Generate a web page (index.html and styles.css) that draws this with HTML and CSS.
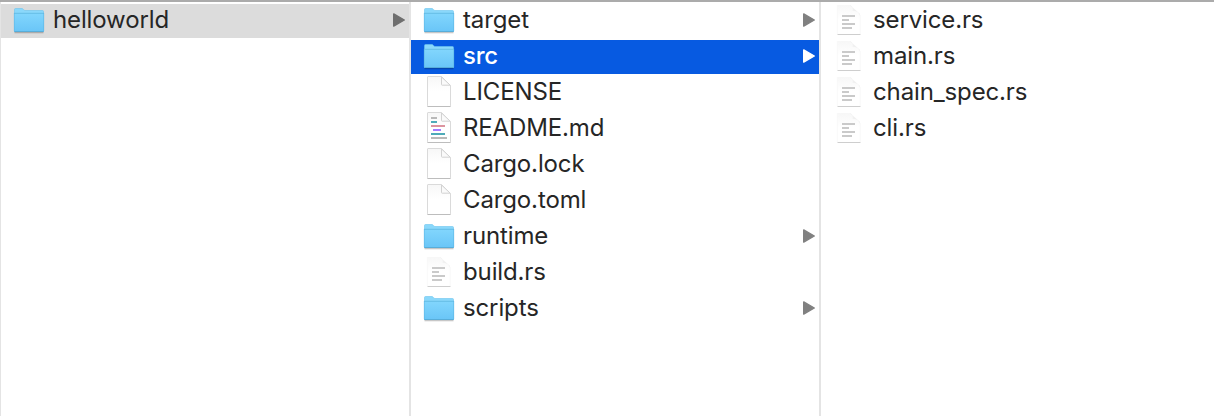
FILE: index.html
```html
<!DOCTYPE html>
<html lang="en">
<head>
<meta charset="utf-8">
<title>helloworld</title>
<link rel="stylesheet" href="styles.css">
</head>
<body>
<svg class="defs" aria-hidden="true">
  <defs>
    <linearGradient id="folder-fill" x1="0" y1="0" x2="0" y2="1"><stop offset="0" stop-color="#82d6fd"/><stop offset="1" stop-color="#69c5f7"/></linearGradient>
    <linearGradient id="paper-fill" x1="0" y1="0" x2="0" y2="1"><stop offset="0" stop-color="#f7f7f7"/><stop offset=".5" stop-color="#fff"/></linearGradient>
    <linearGradient id="fold-fill" x1="0" y1="1" x2="1" y2="0"><stop offset="0" stop-color="#fff"/><stop offset=".55" stop-color="#eee"/><stop offset="1" stop-color="#ccc"/></linearGradient>
  </defs>
  <symbol id="folder" viewBox="0 0 32 34">
    <path d="M1.500 28.500h29" stroke="#000" stroke-opacity=".22" stroke-width="1.600"/>
    <path d="M1.500 5.500q0-1 1-1H9c1.300 0 1.500 2 3 2h17.500q1 0 1 1v2h-29Z" fill="#8ad8fb" stroke="#6cc4ee" stroke-width=".6"/>
    <path d="M1 9h30v18.200q0 .8-.8.8H1.800Q1 28 1 27.200Z" fill="url(#folder-fill)"/>
    <path d="M1 9.300h30" stroke="#60b6df" stroke-width=".8"/>
    <path d="M1.300 27.500h29.400" stroke="#58add9"/>
    <path d="M1.300 9v18M30.700 9v18" stroke="#5cb5e3" stroke-width=".6"/>
  </symbol>
  <symbol id="paper" viewBox="0 0 32 34">
    <path d="M5 .5h13.500L27.500 9.500v20.300q0 .7-.7.700H5.200q-.7 0-.7-.7V1Q4.500.5 5 .5Z" fill="url(#paper-fill)" stroke="#dadada"/>
    <path d="M4.500 30.500h23" stroke="#bdbdbd"/>
    <path d="M18.500 1v7.500q0 .7.700.700h8Z" fill="#fafafa" stroke="#d2d2d2"/>
  </symbol>
  <symbol id="markdown" viewBox="0 0 32 34">
    <use href="#paper"/>
    <path d="M8 6h6M8 26h16" stroke="#b9b9b9" stroke-width="2"/>
    <path d="M8 10h6M8 22h14" stroke="#4eabb9" stroke-width="2"/>
    <path d="M8 14h14" stroke="#dc949f" stroke-width="2"/>
    <path d="M10 18h8" stroke="#a77bff" stroke-width="2"/>
  </symbol>
  <symbol id="source" viewBox="0 0 32 34">
    <path d="M4.500 1h13L27 10.500V30H4.500Z" fill="url(#paper-fill)"/>
    <path d="M16.500 1c3 1 3.500 3 3 6 3-.5 6 .5 7.500 4.500V10Z" fill="url(#fold-fill)"/>
    <path d="M4.300 1v29M27.200 11v19" stroke="#f5f5f5" stroke-width=".6"/>
    <path d="M4.500 30.500h23" stroke="#cecece"/>
    <path d="M9 12h13M9 16h7M9 20h13M9 24h10" stroke="#cacaca" stroke-width="1.800"/>
  </symbol>
  <symbol id="arrow" viewBox="0 0 12 14">
    <path d="M.7.900 11.300 7 .7 13.100Z" fill="currentColor" stroke="currentColor" stroke-width="1.400" stroke-linejoin="round"/>
  </symbol>
</svg>
<main class="browser">
  <ul class="column column-first">
    <li class="row row-open"><svg class="icon"><use href="#folder"/></svg><span class="name">helloworld</span><svg class="arrow"><use href="#arrow"/></svg></li>
  </ul>
  <ul class="column">
    <li class="row"><svg class="icon"><use href="#folder"/></svg><span class="name">target</span><svg class="arrow"><use href="#arrow"/></svg></li>
    <li class="row row-selected"><svg class="icon"><use href="#folder"/></svg><span class="name">src</span><svg class="arrow"><use href="#arrow"/></svg></li>
    <li class="row"><svg class="icon"><use href="#paper"/></svg><span class="name">LICENSE</span></li>
    <li class="row"><svg class="icon"><use href="#markdown"/></svg><span class="name">README.md</span></li>
    <li class="row"><svg class="icon"><use href="#paper"/></svg><span class="name">Cargo.lock</span></li>
    <li class="row"><svg class="icon"><use href="#paper"/></svg><span class="name">Cargo.toml</span></li>
    <li class="row"><svg class="icon"><use href="#folder"/></svg><span class="name">runtime</span><svg class="arrow"><use href="#arrow"/></svg></li>
    <li class="row"><svg class="icon"><use href="#source"/></svg><span class="name">build.rs</span></li>
    <li class="row"><svg class="icon"><use href="#folder"/></svg><span class="name">scripts</span><svg class="arrow"><use href="#arrow"/></svg></li>
  </ul>
  <ul class="column column-last">
    <li class="row"><svg class="icon"><use href="#source"/></svg><span class="name">service.rs</span></li>
    <li class="row"><svg class="icon"><use href="#source"/></svg><span class="name">main.rs</span></li>
    <li class="row"><svg class="icon"><use href="#source"/></svg><span class="name">chain_spec.rs</span></li>
    <li class="row"><svg class="icon"><use href="#source"/></svg><span class="name">cli.rs</span></li>
  </ul>
</main>
</body>
</html>
```

FILE: styles.css
```css
* {
  box-sizing: border-box;
}

body {
  margin: 0;
  background: #fff;
  color: #262626;
  font-family: Inter, "Liberation Sans", sans-serif;
  font-size: 24px;
  letter-spacing: -0.13px;
}

.defs {
  display: block;
  width: 0;
  height: 0;
}

.browser {
  display: grid;
  grid-template-columns: 411px 410px 1fr;
  height: 416px;
  border-top: 2px solid #ababab;
}

.column {
  display: flex;
  flex-direction: column;
  gap: 2px;
  margin: 0;
  padding: 2px 0 0;
  list-style: none;
  border-right: 2px solid #e4e4e4;
}

.column-first {
  border-left: 1px solid #e4e4e4;
}

.column-last {
  border-right: 0;
}

.row {
  display: flex;
  align-items: flex-start;
  gap: 8px;
  height: 34px;
  padding: 0 4px 0 12px;
}

.row-open {
  background: #dcdcdc;
}

.row-open .arrow {
  color: #6e6e6e;
}

.row-selected {
  background: #075ae1;
  color: #fff;
  font-weight: 500;
  letter-spacing: -0.3px;
}

.row-selected .arrow {
  color: #fff;
}

.icon {
  flex: none;
  width: 32px;
  height: 34px;
}

.name {
  flex: 1;
  line-height: 32px;
  white-space: nowrap;
}

.arrow {
  flex: none;
  width: 12px;
  height: 14px;
  margin-top: 9px;
  color: #808080;
}
```
